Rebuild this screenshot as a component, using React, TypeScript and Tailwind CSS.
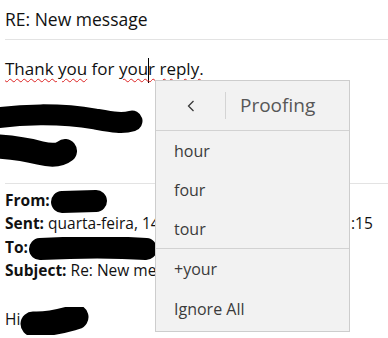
const font = "font-['Open_Sans','Noto_Sans',sans-serif]"

function Blot({ w, h, d, sw }: { w: number; h: number; d: string; sw: number }) {
    return (
        <svg width={w} height={h} viewBox={`0 0 ${w} ${h}`} className="inline-block align-middle">
            <path d={d} fill="none" stroke="#000" strokeWidth={sw} strokeLinecap="round" strokeLinejoin="round" />
        </svg>
    )
}

function ProofingMenu() {
    const rows = ['hour', 'four', 'tour']
    return (
        <div className={`absolute left-[155px] top-[80px] w-[195px] h-[252px] border border-[#cdcdcd] bg-[#f2f2f2] ${font}`}>
            <div className="h-[50px] flex items-center border-b border-[#d2d2d2]">
                <div className="w-[69px] flex justify-center">
                    <svg width="10" height="14" viewBox="0 0 10 14">
                        <path d="M7.5 2 L2.5 7 L7.5 12" fill="none" stroke="#3a3a3a" strokeWidth="1.3" />
                    </svg>
                </div>
                <div className="w-px h-[27px] bg-[#d4d4d4]" />
                <div className="pl-[14px] text-[19px] text-[#575757]">Proofing</div>
            </div>
            <div className="border-b border-[#d2d2d2]">
                {rows.map((r) => (
                    <div key={r} className="h-[39px] flex items-center pl-[18px] text-[16px] text-[#3b3b3b]">{r}</div>
                ))}
            </div>
            <div className="h-[40px] flex items-center pl-[18px] text-[16px] text-[#3b3b3b]">+your</div>
            <div className="h-[40px] flex items-center pl-[18px] text-[16px] text-[#3b3b3b]">Ignore All</div>
        </div>
    )
}

export default function App() {
    return (
        <div className={`relative w-[388px] h-[338px] overflow-hidden bg-white text-[#111] ${font}`}>
            <div className="h-[39px] pl-[5px] flex items-center text-[17.5px]">RE: New message</div>
            <div className="ml-[5px] h-px bg-[#e3e3e3]" />

            <div className="pt-[17px] pl-[5px] text-[17px] leading-[24px] whitespace-nowrap">
                <span className="underline decoration-wavy decoration-[#d22] decoration-1 underline-offset-[3px]">Thank you</span>
                {' for '}
                <span className="underline decoration-wavy decoration-[#d22] decoration-1 underline-offset-[3px]">
                    you<span className="inline-block w-px h-[25px] bg-black align-middle -mx-[0.5px]" />r
                </span>
                {' '}
                <span className="underline decoration-wavy decoration-[#d22] decoration-1 underline-offset-[3px]">reply.</span>
            </div>

            <svg width="160" height="70" viewBox="0 0 160 70" className="block mt-[19px]">
                <path d="M-10 17 C 20 12, 60 11, 95 17 C 112 20, 122 22, 132 19" fill="none" stroke="#000" strokeWidth="21" strokeLinecap="round" />
                <path d="M-10 44 C 10 45, 25 47, 40 51 C 52 54, 60 53, 65 49" fill="none" stroke="#000" strokeWidth="24" strokeLinecap="round" />
            </svg>

            <div className="mt-[11px] ml-[5px] h-px bg-[#e3e3e3]" />

            <div className="pt-[5px] pl-[5px] text-[15.5px] leading-[23.5px] whitespace-nowrap">
                <div className="h-[23.5px]">
                    <b>From:</b>
                    <Blot w={58} h={24} d="M12 12 L46 11" sw={22} />
                </div>
                <div>
                    <b>Sent:</b> quarta-feira, 1<span className="tracking-[0.3px]">4 de novembro de 2018 1</span>1:15
                </div>
                <div className="h-[23.5px]">
                    <b>To:</b>
                    <Blot w={130} h={24} d="M12 12 C 50 10, 90 10, 118 12" sw={22} />
                </div>
                <div><b>Subject:</b> Re: New message</div>
                <div className="mt-[24px] h-[23.5px]">
                    Hi
                    <Blot w={70} h={28} d="M13 17 C 30 18, 45 13, 56 10" sw={25} />
                </div>
            </div>

            <ProofingMenu />
        </div>
    )
}
